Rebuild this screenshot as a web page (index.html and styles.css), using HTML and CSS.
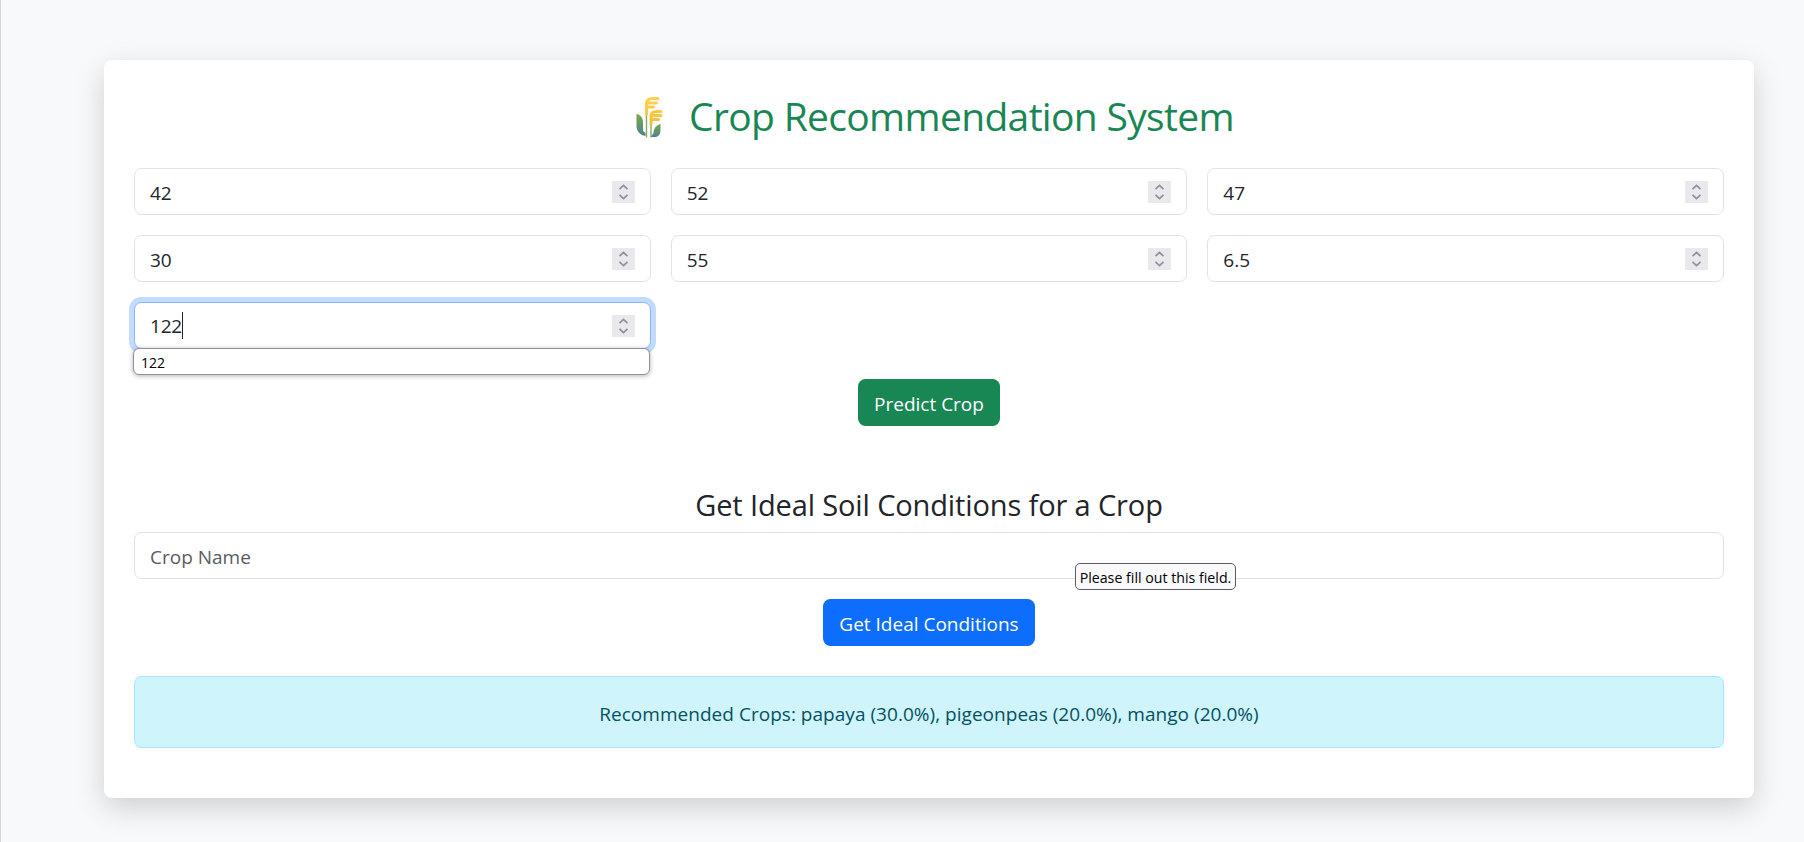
FILE: index.html
```html
<!DOCTYPE html>
<html lang="en">
<head>
<meta charset="utf-8">
<title>Crop Recommendation System</title>
<link rel="stylesheet" href="styles.css">
</head>
<body>
<svg class="defs" width="0" height="0">
  <symbol id="spin" viewBox="0 0 23 22">
    <rect width="23" height="22" fill="#e9e9ed"/>
    <path d="M7.5 8.2L11.5 4.5L15.5 8.2M7.5 13.8L11.5 17.5L15.5 13.8" fill="none" stroke="#8f8f9d" stroke-width="1.7"/>
  </symbol>
</svg>
<main class="card">
  <h1 class="title">
    <svg class="crop-icon" viewBox="-1.500 -1 55 48">
      <defs>
        <linearGradient id="leaf" x1="0" y1="0" x2="0" y2="1"><stop offset="0" stop-color="#78ad45"/><stop offset="1" stop-color="#4c8098"/></linearGradient>
        <linearGradient id="grain" gradientUnits="userSpaceOnUse" x1="0" y1="2" x2="0" y2="30"><stop offset="0" stop-color="#ffd44f"/><stop offset="1" stop-color="#f5bd3c"/></linearGradient>
      </defs>
      <path d="M11 19C15 19.500 17.500 23 17.500 27V36L20 38V41C14 40 11 36 11 31Z" fill="url(#leaf)"/>
      <path d="M35 29C31 30 28 33 28 38L25 42H30C34 41.500 35 38 35 35Z" fill="url(#leaf)"/>
      <path d="M21 18V42.500M25.500 30V42.500" stroke="#7fa75a" stroke-width="1.300" fill="none"/>
      <path d="M21 19V9Q21 3.500 27 3.500H32.500M22 8H31M22 12H28" stroke="url(#grain)" stroke-width="3" stroke-linecap="round" fill="none"/>
      <path d="M25.500 29V21Q25.500 16.500 31 16.500H35.500M26 20.500H35.500M26 24.500H33" stroke="url(#grain)" stroke-width="3" stroke-linecap="round" fill="none"/>
    </svg>
    <span class="title-text">Crop Recommendation System</span>
  </h1>
  <form class="grid">
    <div class="field"><span>42</span><svg class="spin"><use href="#spin"/></svg></div>
    <div class="field"><span>52</span><svg class="spin"><use href="#spin"/></svg></div>
    <div class="field"><span>47</span><svg class="spin"><use href="#spin"/></svg></div>
    <div class="field"><span>30</span><svg class="spin"><use href="#spin"/></svg></div>
    <div class="field"><span>55</span><svg class="spin"><use href="#spin"/></svg></div>
    <div class="field"><span>6.5</span><svg class="spin"><use href="#spin"/></svg></div>
    <div class="field focused"><span class="typed">122</span><svg class="spin"><use href="#spin"/></svg>
      <div class="suggestions">122</div>
    </div>
  </form>
  <button class="btn predict" type="button">Predict Crop</button>
  <h3 class="subtitle">Get Ideal Soil Conditions for a Crop</h3>
  <div class="field name-field"><span class="placeholder">Crop Name</span>
    <div class="tooltip">Please fill out this field.</div>
  </div>
  <button class="btn ideal" type="button">Get Ideal Conditions</button>
  <div class="alert"><span>Recommended Crops: papaya (30.0%), pigeonpeas (20.0%), mango (20.0%)</span></div>
</main>
</body>
</html>
```
FILE: styles.css
```css
* { box-sizing: border-box; }
body {
  margin: 0;
  height: 842px;
  padding: 60px 50px 0 103px;
  border-left: 1px solid #d5d6d8;
  background: #f8f9fb;
  color: #212529;
  font: 19px/30px "Open Sans", "Noto Sans", sans-serif;
  overflow: hidden;
}
.defs { position: absolute; }
.card {
  display: flex;
  flex-direction: column;
  align-items: center;
  height: 738px;
  padding: 30px;
  border-radius: 8px;
  background: #fff;
  box-shadow: 0 10px 30px rgba(0, 0, 0, .17);
}
.title {
  display: flex;
  align-items: center;
  gap: 10px;
  height: 48px;
  margin: 4px 0 26px;
  color: #198754;
  font-size: 39px;
  font-weight: 400;
  letter-spacing: -.67px;
  line-height: 48px;
  white-space: nowrap;
}
.title-text { padding-bottom: 5px; }
.crop-icon { width: 55px; height: 48px; }
.grid {
  display: grid;
  grid-template-columns: repeat(3, 1fr);
  gap: 20px;
  width: 100%;
}
.field {
  position: relative;
  display: flex;
  align-items: center;
  justify-content: space-between;
  height: 47px;
  padding: 0 15px;
  border: 1px solid #dee2e6;
  border-radius: 7.5px;
  background: #fff;
}
.field > span { padding-top: 2px; }
.spin { width: 23px; height: 22px; }
.focused { border-color: #86b7fe; box-shadow: 0 0 0 5px #c2dbfe; }
.field > .typed {
  padding-top: 2px;
  border-right: 1px solid #212529;
  letter-spacing: -.2px;
  line-height: 25px;
}
.suggestions {
  position: absolute;
  top: 45px;
  left: -2px;
  width: 517px;
  height: 27px;
  padding-left: 7px;
  border: 1px solid #8f8f9d;
  border-radius: 6px;
  background: #fff;
  box-shadow: 0 1px 5px rgba(0, 0, 0, .3);
  color: #000;
  font-size: 14px;
  line-height: 27px;
}
.btn {
  height: 47px;
  padding: 2px 0 0;
  border: 0;
  border-radius: 7.5px;
  color: #fff;
  font: inherit;
  white-space: nowrap;
}
.predict { width: 142px; margin-top: 30px; background: #198754; }
.ideal { width: 212px; margin-top: 20px; background: #0d6efd; }
.subtitle {
  height: 42px;
  margin: 60px 0 4px;
  font-size: 29px;
  font-weight: 400;
  letter-spacing: -.13px;
  line-height: 38px;
  white-space: nowrap;
}
.name-field { width: 100%; }
.placeholder { color: #595c5f; }
.tooltip {
  position: absolute;
  top: 30px;
  left: 940px;
  width: 161px;
  height: 27px;
  border: 1px solid #5b5b66;
  border-radius: 5px;
  background: #f9f9fb;
  color: #000;
  font-size: 14.2px;
  line-height: 27px;
  text-align: center;
  white-space: nowrap;
}
.alert {
  width: 100%;
  height: 72px;
  margin-top: 30px;
  padding-top: 1px;
  border: 1px solid #9eeaf9;
  border-radius: 7.5px;
  background: #cff4fc;
  color: #055160;
  letter-spacing: .03px;
  line-height: 72px;
  text-align: center;
}
```
